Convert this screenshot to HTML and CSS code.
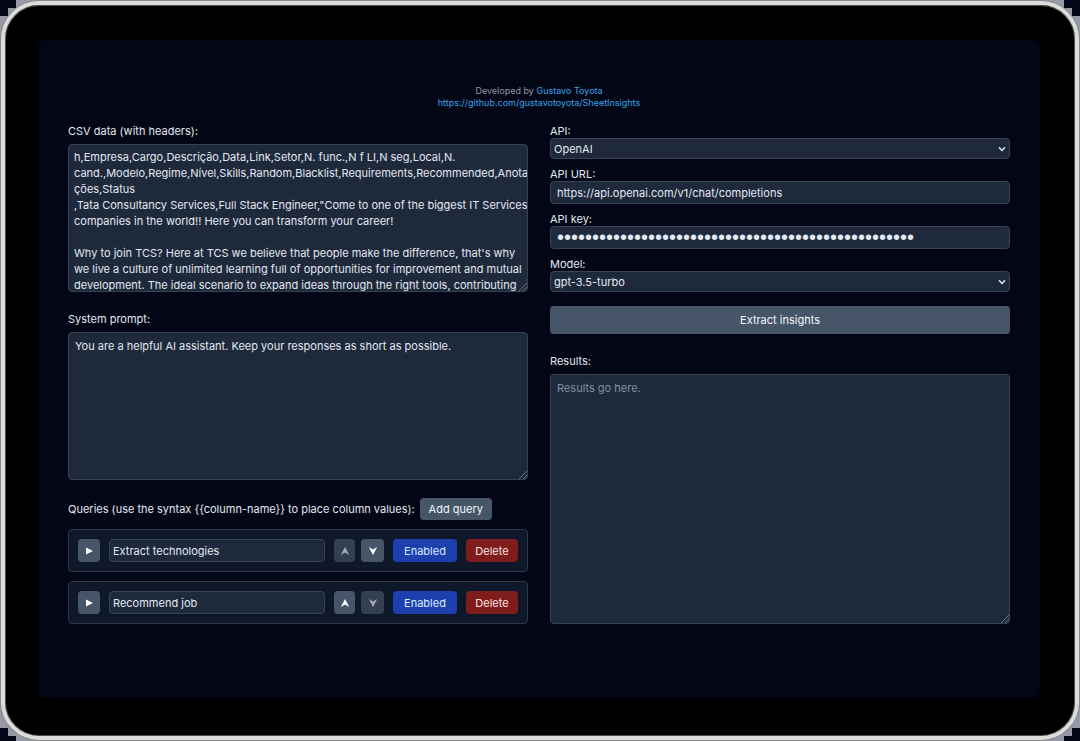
FILE: index.html
```html
<!DOCTYPE html>
<html lang="en">
<head>
<meta charset="utf-8">
<meta name="viewport" content="width=device-width, initial-scale=1">
<title>SheetInsights</title>
<link rel="stylesheet" href="styles.css">
</head>
<body>
<div class="device">
<div class="screen">
<header class="credits">
<div>Developed by <a href="https://github.com/gustavotoyota">Gustavo Toyota</a></div>
<div><a href="https://github.com/gustavotoyota/SheetInsights">https://github.com/gustavotoyota/SheetInsights</a></div>
</header>
<main class="columns">
<section class="column">
<div class="block">
<label for="csv">CSV data (with headers):</label>
<textarea class="field area csv" id="csv" spellcheck="false">h,Empresa,Cargo,Descrição,Data,Link,Setor,N. func.,N f LI,N seg,Local,N.
cand.,Modelo,Regime,Nível,Skills,Random,Blacklist,Requirements,Recommended,Anota
ções,Status
,Tata Consultancy Services,Full Stack Engineer,"Come to one of the biggest IT Services
companies in the world!! Here you can transform your career!

Why to join TCS? Here at TCS we believe that people make the difference, that's why
we live a culture of unlimited learning full of opportunities for improvement and mutual
development. The ideal scenario to expand ideas through the right tools, contributing</textarea>
</div>
<div class="block">
<label for="prompt">System prompt:</label>
<textarea class="field area" id="prompt" spellcheck="false">You are a helpful AI assistant. Keep your responses as short as possible.</textarea>
</div>
<div class="queries">
<div class="queries-head">
<span>Queries (use the syntax {{column-name}} to place column values):</span>
<button class="btn add" type="button">Add query</button>
</div>
<div class="query">
<button class="btn play" type="button" aria-label="Run"><svg width="7" height="8" viewBox="0 0 7 8"><path d="M0 0.5 7 4 0 7.5Z"/></svg></button>
<input class="field name" type="text" value="Extract technologies" aria-label="Query name">
<div class="order">
<button class="btn up" type="button" aria-label="Move up" disabled><svg width="10" height="8" viewBox="0 0 10 8"><path d="M5 0 9.2 8 5 5.4 0.8 8Z"/></svg></button>
<button class="btn down" type="button" aria-label="Move down"><svg width="10" height="8" viewBox="0 0 10 8"><path d="M5 8 9.2 0 5 2.6 0.8 0Z"/></svg></button>
</div>
<button class="btn enabled" type="button">Enabled</button>
<button class="btn delete" type="button">Delete</button>
</div>
<div class="query">
<button class="btn play" type="button" aria-label="Run"><svg width="7" height="8" viewBox="0 0 7 8"><path d="M0 0.5 7 4 0 7.5Z"/></svg></button>
<input class="field name" type="text" value="Recommend job" aria-label="Query name">
<div class="order">
<button class="btn up" type="button" aria-label="Move up"><svg width="10" height="8" viewBox="0 0 10 8"><path d="M5 0 9.2 8 5 5.4 0.8 8Z"/></svg></button>
<button class="btn down" type="button" aria-label="Move down" disabled><svg width="10" height="8" viewBox="0 0 10 8"><path d="M5 8 9.2 0 5 2.6 0.8 0Z"/></svg></button>
</div>
<button class="btn enabled" type="button">Enabled</button>
<button class="btn delete" type="button">Delete</button>
</div>
</div>
</section>
<section class="column">
<div class="settings">
<div class="setting">
<label for="api">API:</label>
<div class="select"><select class="field" id="api"><option>OpenAI</option></select><svg class="chevron" width="8" height="6" viewBox="0 0 8 6"><path d="M1 1.2 4 4.4 7 1.2"/></svg></div>
</div>
<div class="setting">
<label for="url">API URL:</label>
<input class="field" id="url" type="text" value="https://api.openai.com/v1/chat/completions">
</div>
<div class="setting">
<label for="key">API key:</label>
<input class="field secret" id="key" type="password" value="sk-aaaaaaaaaaaaaaaaaaaaaaaaaaaaaaaaaaaaaaaaaaaaaaaa">
</div>
<div class="setting">
<label for="model">Model:</label>
<div class="select"><select class="field" id="model"><option>gpt-3.5-turbo</option></select><svg class="chevron" width="8" height="6" viewBox="0 0 8 6"><path d="M1 1.2 4 4.4 7 1.2"/></svg></div>
</div>
</div>
<button class="btn extract" type="button">Extract insights</button>
<div class="block results">
<label for="results">Results:</label>
<textarea class="field area" id="results" placeholder="Results go here."></textarea>
</div>
</section>
</main>
</div>
</div>
</body>
</html>
```
FILE: styles.css
```css
* {
  box-sizing: border-box;
}

body {
  margin: 0;
  min-height: 100vh;
  display: flex;
  padding: 1px;
  font: 11px/14px Inter, "Noto Sans", sans-serif;
  color: #e2e8f0;
  --corner: linear-gradient(#020617, #020617);
  background:
    var(--corner) left top / 16px 8px,
    var(--corner) left top / 8px 16px,
    var(--corner) right top / 16px 8px,
    var(--corner) right top / 8px 16px,
    var(--corner) left bottom / 16px 5px,
    var(--corner) left bottom / 8px 13px,
    var(--corner) right bottom / 16px 5px,
    var(--corner) right bottom / 8px 13px,
    #9699a8;
  background-repeat: no-repeat;
}

.device {
  flex: 1;
  display: flex;
  min-width: 0;
  padding: 35px 35px 38px 33px;
  border: 4px solid #dcdcda;
  border-radius: 38px;
  background: #000;
  box-shadow: 0 0 0 1px #888789, inset 0 0 0 1px #504f4e;
}

.screen {
  flex: 1;
  min-width: 0;
  padding: 45px 30px 30px;
  border-radius: 8px;
  background: #020615;
}

.credits {
  margin-bottom: 15px;
  text-align: center;
  font-size: 9px;
  line-height: 12px;
  color: #94979f;
}

.credits a {
  color: #38a3e8;
  text-decoration: none;
}

.columns {
  display: grid;
  grid-template-columns: 1fr 1fr;
  gap: 22px;
}

.column {
  display: flex;
  flex-direction: column;
  min-width: 0;
}

.block {
  display: flex;
  flex-direction: column;
  gap: 6px;
  margin-bottom: 20px;
}

.field {
  width: 100%;
  height: 23px;
  margin: 0;
  padding: 0 6px;
  border: 1px solid #374353;
  border-radius: 4px;
  background: #1e293b;
  color: #e2e8f0;
  font: inherit;
  outline: none;
}

.area {
  display: block;
  height: 148px;
  padding: 5px 6px;
  line-height: 16px;
  overflow: hidden;
  resize: vertical;
}

.csv {
  padding: 4px 0 0 5px;
  white-space: pre;
}

.area::placeholder {
  color: #8490a1;
}

.area::-webkit-resizer {
  background: linear-gradient(135deg,
    transparent 15px, #64707f 15px 16px,
    transparent 16px 18px, #64707f 18px 19px,
    transparent 19px 21px, #64707f 21px 22px, transparent 22px);
}

.secret {
  font: 20px/21px "Liberation Sans", sans-serif;
}

.btn {
  display: flex;
  align-items: center;
  justify-content: center;
  height: 23px;
  margin: 0;
  padding: 0;
  border: 0;
  border-radius: 4px;
  background: #475569;
  color: #f1f5f9;
  font: inherit;
}

.btn svg {
  fill: #fff;
}

.btn:disabled {
  background: #343f50;
}

.btn:disabled svg {
  fill: #a5acb5;
}

.queries {
  display: flex;
  flex-direction: column;
  gap: 9px;
}

.queries-head {
  display: flex;
  align-items: center;
  gap: 5px;
  margin-top: -2px;
}

.add {
  width: 72px;
  height: 22px;
}

.query {
  display: flex;
  align-items: center;
  gap: 9px;
  padding: 9px;
  border: 1px solid #2e3848;
  border-radius: 4px;
  background: #0f172a;
}

.play {
  flex: none;
  width: 22px;
}

.name {
  flex: 1;
  min-width: 0;
  padding: 0 3px;
}

.order {
  display: flex;
  gap: 6px;
}

.up {
  width: 21px;
}

.down {
  width: 23px;
}

.enabled {
  width: 64px;
  background: #1e40af;
  color: #dbeafe;
}

.delete {
  width: 52px;
  background: #7f1d1d;
  color: #fee2e2;
}

.settings {
  display: flex;
  flex-direction: column;
  gap: 8px;
}

.setting {
  display: flex;
  flex-direction: column;
}

.select {
  position: relative;
  display: flex;
}

.select .field {
  height: 21px;
  padding: 0 3px;
  appearance: none;
}

.chevron {
  position: absolute;
  top: 8px;
  right: 4px;
  fill: none;
  stroke: #e2e8f0;
  stroke-width: 1.5;
  pointer-events: none;
}

.extract {
  height: 28px;
  margin: 14px 0 20px;
}

.results {
  flex: 1;
  margin-bottom: 0;
}

.results .area {
  flex: 1;
}
```
